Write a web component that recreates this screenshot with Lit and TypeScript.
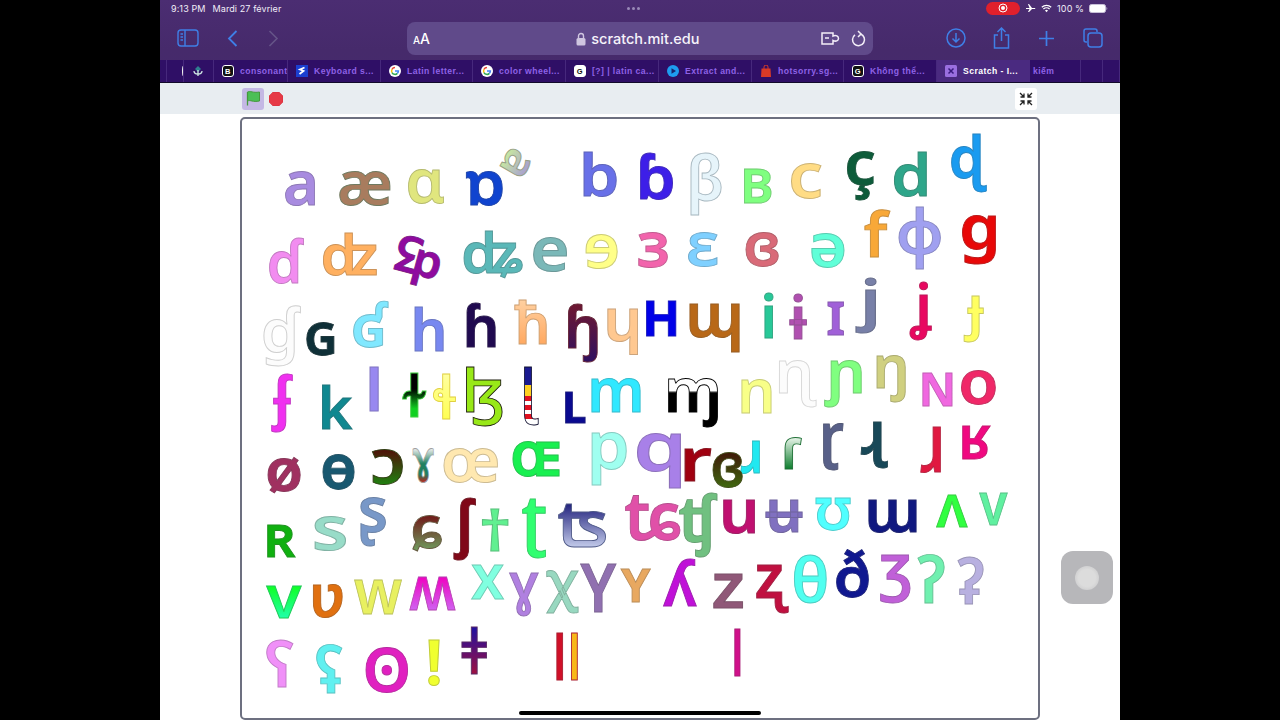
import { LitElement, html, svg, css } from "lit";
import { customElement } from "lit/decorators.js";

type Stop = [number, string];
interface G { c: string; b: number[]; f: string; s?: string; g?: Stop[]; h?: boolean; r?: number; }

const v = (a: string, b: string): Stop[] => [[0, a], [1, b]];

const GLYPHS: G[] = [
  { c: "a", b: [285, 171, 315, 206], f: "#a88be0" },
  { c: "æ", b: [339, 171, 391, 206], f: "#a87c5e", s: "#6f7a60" },
  { c: "ɑ", b: [408, 169, 444, 204], f: "#e0e67e" },
  { c: "ɒ", b: [466, 171, 503, 206], f: "#1044cf" },
  { c: "ɐ", b: [499, 144, 534, 181], f: "#b4c0a0", g: v("#c8e8a0", "#a8a0d0"), r: -60 },
  { c: "b", b: [583, 153, 617, 198], f: "#6870e8" },
  { c: "ɓ", b: [640, 152, 673, 200], f: "#3d1fe8" },
  { c: "β", b: [690, 152, 722, 215], f: "#e6f4fa", s: "#a8b8c0" },
  { c: "ʙ", b: [744, 168, 772, 203], f: "#7fff80" },
  { c: "c", b: [791, 163, 822, 199], f: "#ffdc85" },
  { c: "ç", b: [847, 150, 875, 200], f: "#0d5c3a" },
  { c: "d", b: [894, 152, 927, 198], f: "#2ea68a" },
  { c: "ɖ", b: [951, 134, 987, 192], f: "#1a9bf0" },

  { c: "ɗ", b: [269, 238, 304, 284], f: "#f28cf0" },
  { c: "ʣ", b: [323, 233, 377, 277], f: "#ffb060" },
  { c: "ʤ", b: [387, 233, 448, 290], f: "#8f0aa0", r: 195 },
  { c: "ʥ", b: [463, 230, 523, 279], f: "#5ab8b8" },
  { c: "e", b: [533, 237, 567, 272], f: "#7ab8b8" },
  { c: "ɘ", b: [585, 234, 618, 269], f: "#ffff88" },
  { c: "ɜ", b: [638, 232, 668, 268], f: "#f264ac" },
  { c: "ɛ", b: [688, 232, 718, 267], f: "#7fd0ff" },
  { c: "ɞ", b: [745, 232, 779, 267], f: "#d96a78" },
  { c: "ə", b: [811, 233, 845, 268], f: "#60ffd8" },
  { c: "f", b: [864, 209, 891, 257], f: "#f8a838" },
  { c: "ɸ", b: [898, 207, 941, 269], f: "#a0a0f0" },
  { c: "g", b: [962, 215, 996, 264], f: "#e80808" },

  { c: "ɠ", b: [263, 306, 301, 367], f: "#fcfcfc", s: "#cfcfcf" },
  { c: "ɢ", b: [306, 322, 335, 356], f: "#0f3038" },
  { c: "ʛ", b: [353, 301, 389, 348], f: "#80e8ff" },
  { c: "h", b: [414, 307, 444, 352], f: "#7888f0" },
  { c: "ɦ", b: [466, 302, 496, 347], f: "#200a50" },
  { c: "ħ", b: [514, 300, 547, 345], f: "#ffc080", g: v("#ffd0a0", "#ffa860") },
  { c: "ɧ", b: [568, 303, 598, 362], f: "#701830", g: v("#701830", "#301060") },
  { c: "ɥ", b: [607, 309, 638, 355], f: "#ffc890" },
  { c: "ʜ", b: [646, 300, 677, 336], f: "#0000e8" },
  { c: "ɰ", b: [689, 303, 740, 352], f: "#b86818" },
  { c: "i", b: [764, 292, 774, 338], f: "#28c898" },
  { c: "ɨ", b: [789, 293, 807, 339], f: "#b050b0" },
  { c: "ɪ", b: [827, 301, 844, 335], f: "#a060d8" },
  { c: "j", b: [855, 278, 877, 334], f: "#7880a8" },
  { c: "ʝ", b: [909, 282, 932, 341], f: "#e80860" },
  { c: "ɟ", b: [963, 296, 984, 343], f: "#ffff60", s: "#c8c860" },

  { c: "ʄ", b: [271, 373, 293, 432], f: "#f030f0" },
  { c: "k", b: [322, 385, 353, 430], f: "#108890" },
  { c: "l", b: [369, 367, 379, 412], f: "#9888f0" },
  { c: "ɫ", b: [402, 373, 427, 418], f: "#10c010", s: "#40d040", g: [[0, "#000"], [0.35, "#000"], [0.8, "#10d020"]] },
  { c: "ɬ", b: [433, 374, 456, 420], f: "#ffff60", s: "#e0d040", g: v("#ffffa0", "#ffff50") },
  { c: "ɮ", b: [466, 367, 503, 427], f: "#98e818", s: "#202010" },
  { c: "ɭ", b: [524, 367, 539, 425], f: "#fff", s: "#101030", g: [[0, "#1a1a90"], [0.3, "#1a1a90"], [0.3, "#ffd020"], [0.5, "#ffd020"], [0.5, "#e01020"], [0.58, "#e01020"], [0.58, "#fff"], [0.66, "#fff"], [0.66, "#e01020"], [0.74, "#e01020"], [0.74, "#fff"], [0.82, "#fff"], [0.82, "#e01020"], [0.9, "#e01020"], [0.9, "#fff"], [1, "#fff"]] },
  { c: "ʟ", b: [565, 391, 586, 423], f: "#0a0a90" },
  { c: "m", b: [591, 377, 641, 412], f: "#30e8ff" },
  { c: "ɱ", b: [668, 378, 718, 427], f: "#000", s: "#000", g: [[0, "#fff"], [0.25, "#fff"], [0.3, "#000"]] },
  { c: "n", b: [741, 378, 772, 413], f: "#f8ff88" },
  { c: "ɳ", b: [779, 360, 817, 408], f: "#fcfcfc", s: "#d8d8d8" },
  { c: "ɲ", b: [824, 360, 862, 408], f: "#80ff80" },
  { c: "ŋ", b: [876, 355, 906, 403], f: "#d0d080" },
  { c: "ɴ", b: [922, 372, 953, 406], f: "#f068e0" },
  { c: "o", b: [961, 370, 996, 405], f: "#f02868" },

  { c: "ø", b: [267, 457, 301, 494], f: "#a03060" },
  { c: "ɵ", b: [322, 454, 355, 490], f: "#185870" },
  { c: "ɔ", b: [372, 449, 403, 485], f: "#283c00", g: v("#501008", "#208010") },
  { c: "ɤ", b: [412, 448, 434, 483], f: "#208060", s: "#a0a0a0", g: [[0, "#f0f0f0"], [0.45, "#208060"], [0.75, "#208060"], [1, "#c02018"]] },
  { c: "œ", b: [443, 448, 498, 483], f: "#ffe8b0" },
  { c: "ɶ", b: [512, 441, 560, 477], f: "#18f050" },
  { c: "p", b: [591, 432, 627, 486], f: "#a0fff0" },
  { c: "q", b: [637, 433, 681, 488], f: "#a880e8" },
  { c: "r", b: [684, 447, 712, 481], f: "#a00010" },
  { c: "ɹ", b: [740, 440, 760, 474], f: "#20e8f0" },
  { c: "ɞ", b: [712, 452, 743, 488], f: "#405008", g: v("#401808", "#406810") },
  { c: "ɾ", b: [784, 436, 802, 469], f: "#108030", g: v("#f0f8f0", "#108030") },
  { c: "ɽ", b: [823, 423, 844, 471], f: "#586088" },
  { c: "ɻ", b: [860, 422, 888, 469], f: "#184858" },
  { c: "ɺ", b: [920, 427, 941, 474], f: "#e01840" },
  { c: "ʁ", b: [962, 425, 991, 459], f: "#f00880" },

  { c: "ʀ", b: [267, 523, 296, 557], f: "#10b010" },
  { c: "s", b: [314, 516, 346, 551], f: "#98dcc8" },
  { c: "ʂ", b: [360, 497, 386, 546], f: "#7898c8" },
  { c: "ɕ", b: [412, 515, 442, 552], f: "#70603c", g: v("#701818", "#70a060") },
  { c: "ʃ", b: [453, 497, 476, 560], f: "#800818" },
  { c: "†", b: [482, 509, 509, 552], f: "#60f090" },
  { c: "ʈ", b: [522, 499, 546, 558], f: "#30ff70" },
  { c: "ʦ", b: [558, 503, 606, 547], f: "#5060a0", g: v("#20207c", "#c0c8e8") },
  { c: "ʨ", b: [625, 495, 681, 541], f: "#e050a8" },
  { c: "ʧ", b: [679, 493, 718, 558], f: "#70c080" },
  { c: "u", b: [723, 499, 755, 534], f: "#c01070" },
  { c: "ʉ", b: [765, 499, 803, 533], f: "#8070c0" },
  { c: "ʊ", b: [815, 497, 851, 531], f: "#50ffff" },
  { c: "ɯ", b: [868, 499, 917, 533], f: "#101880" },
  { c: "ʌ", b: [936, 494, 968, 527], f: "#30ff40" },
  { c: "v", b: [979, 492, 1008, 525], f: "#60f0a0" },

  { c: "v", b: [266, 585, 302, 618], f: "#10ff60", g: v("#10ff20", "#20ffa8") },
  { c: "ʋ", b: [313, 584, 343, 618], f: "#e07010" },
  { c: "w", b: [354, 579, 402, 614], f: "#e8f060" },
  { c: "ʍ", b: [409, 576, 456, 610], f: "#e040d8", g: v("#f000c0", "#d060f0") },
  { c: "x", b: [471, 564, 504, 599], f: "#80ffe0" },
  { c: "ɣ", b: [509, 573, 539, 617], f: "#b080e0" },
  { c: "χ", b: [546, 570, 579, 614], f: "#98d8c0" },
  { c: "Y", b: [580, 564, 617, 612], f: "#9070b0" },
  { c: "ʏ", b: [620, 568, 651, 602], f: "#e8a860" },
  { c: "ʎ", b: [663, 558, 697, 606], f: "#c010d8" },
  { c: "z", b: [713, 573, 743, 608], f: "#905878" },
  { c: "ʐ", b: [756, 564, 789, 613], f: "#c01040" },
  { c: "θ", b: [794, 554, 827, 603], f: "#50fff0" },
  { c: "ð", b: [836, 549, 869, 598], f: "#101890" },
  { c: "ʒ", b: [880, 554, 911, 603], f: "#c060d8" },
  { c: "ʔ", b: [917, 554, 945, 603], f: "#70f0b0" },
  { c: "ʡ", b: [957, 556, 984, 604], f: "#b8b0e0" },

  { c: "ʕ", b: [266, 639, 294, 687], f: "#f090f8" },
  { c: "ʢ", b: [316, 644, 343, 693], f: "#60f0f0" },
  { c: "ʘ", b: [365, 647, 408, 693], f: "#e020c0" },
  { c: "!", b: [428, 639, 440, 686], f: "#f0ff30" },
  { c: "ǂ", b: [461, 627, 487, 675], f: "#602070", g: v("#2010a0", "#a01040") },
  { c: "ǁ", b: [556, 633, 578, 681], f: "#d01028", h: true, g: [[0, "#d01028"], [0.5, "#d01028"], [0.5, "#f8b818"], [1, "#f8b818"]] },
  { c: "ǀ", b: [734, 629, 741, 677], f: "#d0108a" },
];

const FONT = '"Noto Sans","DejaVu Sans",sans-serif';
const ctx = document.createElement("canvas").getContext("2d")!;

function darker(hex: string): string {
  const h = hex.length === 4 ? hex.slice(1).split("").map((x) => x + x).join("") : hex.slice(1);
  const n = parseInt(h, 16);
  const m = (x: number) => Math.round(x * 0.72 + 20);
  return `rgb(${m((n >> 16) & 255)},${m((n >> 8) & 255)},${m(n & 255)})`;
}

function glyph(d: G, i: number) {
  ctx.font = `600 100px ${FONT}`;
  const t = ctx.measureText(d.c);
  const L = t.actualBoundingBoxLeft, R = t.actualBoundingBoxRight;
  const A = t.actualBoundingBoxAscent, D = t.actualBoundingBoxDescent;
  const bw = Math.max(L + R, 1), bh = Math.max(A + D, 1);
  const [x0, y0, x1, y1] = d.b;
  const cx = (x0 + x1) / 2, cy = (y0 + y1) / 2;
  const W = x1 - x0 - 1, H = y1 - y0 - 1;
  let F: number, sx: number;
  if (d.r) {
    const a = (d.r * Math.PI) / 180, c = Math.abs(Math.cos(a)), s = Math.abs(Math.sin(a));
    const k = Math.min(W / (bw * c + bh * s), H / (bw * s + bh * c));
    F = k * 100; sx = 1;
  } else {
    F = (H / bh) * 100;
    sx = W / ((bw * F) / 100);
  }
  const u = F / 100;
  const gx = ((R - L) / 2) * u, gy = ((D - A) / 2) * u;
  const tf = `translate(${cx} ${cy}) rotate(${d.r || 0}) scale(${sx} 1) translate(${-gx} ${-gy})`;
  const id = `g${i}`;
  const def = d.g
    ? svg`<linearGradient id=${id} gradientUnits="userSpaceOnUse"
        x1=${d.h ? -L * u : 0} y1=${d.h ? 0 : -A * u} x2=${d.h ? R * u : 0} y2=${d.h ? 0 : D * u}>
        ${d.g.map((s) => svg`<stop offset=${s[0]} stop-color=${s[1]}></stop>`)}
      </linearGradient>`
    : null;
  return svg`${def}<text transform=${tf} font-size=${F} fill=${d.g ? `url(#${id})` : d.f}
    stroke=${d.s || darker(d.f)} stroke-width="0.9">${d.c}</text>`;
}

const googleIcon = html`<svg class="fav" viewBox="0 0 12 12">
  <circle cx="6" cy="6" r="6" fill="#fff"></circle>
  <path d="M6 2.6A3.4 3.4 0 0 0 3 4.4" fill="none" stroke="#ea4335" stroke-width="1.5"></path>
  <path d="M3 4.4a3.4 3.4 0 0 0 0 3.2" fill="none" stroke="#fbbc05" stroke-width="1.5"></path>
  <path d="M3 7.6a3.4 3.4 0 0 0 5.4.8" fill="none" stroke="#34a853" stroke-width="1.5"></path>
  <path d="M8.4 8.4A3.4 3.4 0 0 0 9.4 6H6" fill="none" stroke="#4285f4" stroke-width="1.5"></path>
</svg>`;

const squareIcon = (ch: string, bg = "#111", fg = "#fff", bd = "#fff") => html`<svg class="fav" viewBox="0 0 12 12">
  <rect x=".5" y=".5" width="11" height="11" rx="2.5" fill=${bg} stroke=${bd}></rect>
  <text x="6" y="8.6" font-size="7.5" font-weight="700" text-anchor="middle" fill=${fg} font-family="Liberation Sans">${ch}</text>
</svg>`;

const TABS: { w: number; label?: string; icon?: unknown; active?: boolean }[] = [
  { w: 7 },
  { w: 17, icon: html`<span class="cut"></span>` },
  { w: 30, icon: html`<svg class="fav" viewBox="0 0 12 12"><path d="M6 1 9 4 6 7 3 4Z" fill="#2f7f8f"></path><path d="M6 5v6M2 6c0 2 2 3 4 3s4-1 4-3" fill="none" stroke="#cfe8e4" stroke-width="1.3"></path></svg>` },
  { w: 74, label: "consonant", icon: squareIcon("B") },
  { w: 93, label: "Keyboard s...", icon: html`<svg class="fav" viewBox="0 0 12 12"><rect width="12" height="12" fill="#1b3fd0"></rect><path d="M8.5 2.5 4 4.5l3.5 1.5-4 3" fill="none" stroke="#fff" stroke-width="1.8"></path></svg>` },
  { w: 92, label: "Latin letter...", icon: googleIcon },
  { w: 93, label: "color wheel...", icon: googleIcon },
  { w: 93, label: "[?] | latin ca...", icon: squareIcon("G", "#fff", "#111", "#fff") },
  { w: 93, label: "Extract and...", icon: html`<svg class="fav" viewBox="0 0 12 12"><circle cx="6" cy="6" r="6" fill="#1e9bf0"></circle><path d="M4.5 3.2 9 6 4.5 8.8Z" fill="#16246e"></path></svg>` },
  { w: 92, label: "hotsorry.sg...", icon: html`<svg class="fav" viewBox="0 0 12 12"><path d="M1.5 3.5h9l.5 8.500H1Z" fill="#d93a26"></path><path d="M4 4V2a2 2 0 0 1 4 0v2" fill="none" stroke="#d93a26"></path></svg>` },
  { w: 93, label: "Không thể...", icon: squareIcon("G") },
  { w: 93, label: "Scratch - I...", active: true, icon: html`<svg class="fav" viewBox="0 0 12 12"><rect width="12" height="12" rx="1.500" fill="#9a6fe0"></rect><path d="M3.500 3.500 8.500 8.500M8.500 3.500 3.500 8.500" stroke="#3a1a80" stroke-width="1.500"></path></svg>` },
  { w: 51, label: "kiếm" },
  { w: 22 },
  { w: 17 },
];

@customElement("app-root")
export class AppRoot extends LitElement {
  static styles = css`
    :host { display: flex; justify-content: center; width: 1280px; height: 720px; background: #000; overflow: hidden; }
    .screen { position: relative; width: 960px; height: 720px; display: flex; flex-direction: column; background: #fff; overflow: hidden; font-family: "Liberation Sans", Arial, sans-serif; }
    .chrome { background: linear-gradient(#4b2d72, #462a6b 60%, #452a6c); }
    .status { height: 16px; display: flex; align-items: center; padding: 0 12px 0 11px; color: #f2eef8; font-size: 9px; font-weight: 400; font-family: Inter, "Liberation Sans", sans-serif; letter-spacing: 0.1px; }
    .status .date { margin-left: 7px; }
    .status .dots { flex: 1; display: flex; justify-content: center; gap: 2px; padding-left: 0; }
    .status .dots i { width: 3px; height: 3px; border-radius: 50%; background: #9a8ab8; }
    .status .right { display: flex; align-items: center; gap: 5px; }
    .rec { width: 34px; height: 13px; border-radius: 7px; background: #e0202c; display: flex; align-items: center; justify-content: center; }
    .toolbar { height: 44px; display: flex; align-items: center; padding: 0 17px; }
    .tb-left { width: 230px; display: flex; align-items: center; }
    .url { width: 466px; height: 33px; margin-top: 1px; border-radius: 8px; background: #604a8a; display: flex; align-items: center; padding: 0 7px 0 6px; box-sizing: border-box; color: #fff; }
    .aa { width: 164px; font-family: Inter, "Liberation Sans", sans-serif; font-weight: 500; font-size: 14px; }
    .aa small { font-size: 10px; }
    .host { display: flex; align-items: center; gap: 5px; font-family: Inter, "Liberation Sans", sans-serif; font-size: 14.500px; font-weight: 500; color: #f6f3fa; width: 246px; }
    .url-r { display: flex; align-items: center; gap: 11px; }
    .tb-right { display: flex; align-items: center; margin-left: 73px; gap: 27px; }
    .tabs { height: 23px; display: flex; background: #2f0f66; border-bottom: 1px solid #120a2a; box-sizing: border-box; }
    .tab { height: 100%; display: flex; align-items: center; gap: 6px; box-sizing: border-box; border-right: 1px solid #46287c; padding-left: 8px; overflow: hidden; white-space: nowrap; font-weight: 700; font-size: 8.600px; letter-spacing: 0.45px; color: #8e62e6; }
    .tab.blank { padding: 0; }
    .tab.active { background: #4a2a80; color: #fff; border-right-color: #4a2a80; }
    .tab.plain { padding-left: 3px; }
    .fav { width: 12px; height: 12px; flex: none; }
    .cut { width: 2px; height: 10px; margin-left: 7px; border-left: 2px solid #eee; border-radius: 50% 0 0 50%; }
    .controls { height: 31px; background: #e8edf1; display: flex; align-items: center; padding: 0 83px 0 82px; flex: none; }
    .flag { width: 22px; height: 22px; background: #c4b8e4; border-radius: 3px; display: flex; align-items: center; justify-content: center; }
    .stop { margin-left: 5px; flex: 1; display: flex; }
    .full { width: 22px; height: 22px; background: #fff; border-radius: 3px; display: flex; align-items: center; justify-content: center; }
    .body { flex: 1; padding: 3px 0 0 80px; }
    .stage { width: 800px; height: 603px; box-sizing: border-box; border: 2px solid #6d7080; border-radius: 5px; overflow: hidden; background: #fff; }
    .stage svg { display: block; width: 796px; height: 599px; font-family: "Noto Sans", "DejaVu Sans", sans-serif; font-weight: 600; }
    .home { position: absolute; left: 359px; top: 711px; width: 242px; height: 4px; border-radius: 2px; background: #000; }
    .touch { position: absolute; left: 901px; top: 551px; width: 52px; height: 53px; border-radius: 12px; background: #b7b7ba; display: flex; align-items: center; justify-content: center; }
    .touch i { width: 24px; height: 24px; border-radius: 50%; background: radial-gradient(#dcdcdc 50%, #c4c4c6 95%); }
  `;

  render() {
    const blue = "#3f7fe6";
    return html`<div class="screen">
      <div class="chrome">
        <div class="status">
          <span>9:13 PM</span><span class="date">Mardi 27 février</span>
          <span class="dots"><i></i><i></i><i></i></span>
          <span class="right">
            <span class="rec"><svg width="10" height="10" viewBox="0 0 10 10"><circle cx="5" cy="5" r="4" fill="none" stroke="#fff"></circle><circle cx="5" cy="5" r="2" fill="#fff"></circle></svg></span>
            <svg width="11" height="10" viewBox="0 0 11 10"><path d="M1 5h3.500L3 1h1l3 4h3a.6.6 0 0 1 0 1H7L4 9H3l1.500-3H1Z" fill="#fff" transform="rotate(0)"></path></svg>
            <svg width="11" height="9" viewBox="0 0 11 9"><path d="M.8 3.200a7 7 0 0 1 9.400 0M2.400 5a4.500 4.500 0 0 1 6.200 0" fill="none" stroke="#fff" stroke-width="1.200"></path><path d="M4 6.500a2.200 2.200 0 0 1 3 0L5.500 8.200Z" fill="#fff"></path></svg>
            <span>100 %</span>
            <svg width="19" height="9" viewBox="0 0 19 9"><rect x=".5" y=".5" width="16" height="8" rx="2" fill="#fff" stroke="#c8c0d8"></rect><path d="M17.500 3v3c1 0 1-3 0-3Z" fill="#c8c0d8"></path></svg>
          </span>
        </div>
        <div class="toolbar">
          <div class="tb-left">
            <svg width="22" height="18" viewBox="0 0 22 18" fill="none" stroke=${blue} stroke-width="1.400"><rect x="1" y="1" width="20" height="16" rx="3"></rect><path d="M8 1v16M3.500 5H6M3.500 8H6M3.500 11H6"></path></svg>
            <svg style="margin-left:28px" width="11" height="17" viewBox="0 0 11 17" fill="none" stroke=${blue} stroke-width="1.800"><path d="M9.500 1 2 8.500 9.500 16"></path></svg>
            <svg style="margin-left:30px" width="11" height="17" viewBox="0 0 11 17" fill="none" stroke="#655488" stroke-width="1.600"><path d="M1.500 1 9 8.500 1.500 16"></path></svg>
          </div>
          <div class="url">
            <span class="aa"><small>A</small>A</span>
            <span class="host">
              <svg width="10" height="14" viewBox="0 0 10 14"><path d="M2.500 6V4a2.500 2.500 0 0 1 5 0v2" fill="none" stroke="#cfc6e0" stroke-width="1.400"></path><rect x=".5" y="6" width="9" height="7.500" rx="1.500" fill="#cfc6e0"></rect></svg>
              scratch.mit.edu
            </span>
            <span class="url-r">
              <svg width="19" height="15" viewBox="0 0 19 15" fill="none" stroke="#f3eef8" stroke-width="1.500"><path d="M1 2h11v3c3-1.500 5.500.500 5.500 2.500S15 11 12 9.500V13H1Z"></path><path d="M4 7h4"></path></svg>
              <svg width="15" height="17" viewBox="0 0 15 17" fill="none" stroke="#f3eef8" stroke-width="1.500"><path d="M9.500 4A6 6 0 1 1 4 4.800"></path><path d="M7 1l3 3-3 3" transform="translate(0 0)"></path></svg>
            </span>
          </div>
          <div class="tb-right">
            <svg width="20" height="20" viewBox="0 0 20 20" fill="none" stroke=${blue} stroke-width="1.500"><circle cx="10" cy="10" r="9"></circle><path d="M10 5v9M6.500 10.500 10 14l3.500-3.500"></path></svg>
            <svg width="17" height="22" viewBox="0 0 17 22" fill="none" stroke=${blue} stroke-width="1.500"><path d="M5 8H1.500v13h14V8H12M8.500 14V1M4.500 5l4-4 4 4"></path></svg>
            <svg width="15" height="15" viewBox="0 0 15 15" fill="none" stroke=${blue} stroke-width="1.700" style="margin-left:2px"><path d="M7.500 0v15M0 7.500h15"></path></svg>
            <svg width="20" height="20" viewBox="0 0 20 20" fill="none" stroke=${blue} stroke-width="1.500" style="margin-left:2px"><rect x="5" y="5" width="14" height="14" rx="3"></rect><path d="M4 14H3a2 2 0 0 1-2-2V3a2 2 0 0 1 2-2h9a2 2 0 0 1 2 2v1"></path></svg>
          </div>
        </div>
        <div class="tabs">
          ${TABS.map((t) => html`<div class="tab ${t.active ? "active" : ""} ${t.label || t.icon ? "" : "blank"} ${t.label && !t.icon ? "plain" : ""}" style="width:${t.w}px">${t.icon}${t.label ? html`<span>${t.label}</span>` : ""}</div>`)}
        </div>
      </div>
      <div class="controls">
        <div class="flag"><svg width="15" height="15" viewBox="0 0 15 15"><path d="M1.500 1c3-1.500 5 1.200 12 0v9c-7 1.500-9-1.500-12 0Z" fill="#4cbf56" stroke="#45993d"></path><path d="M1.500 1v13.500" stroke="#45993d" stroke-width="1.300"></path></svg></div>
        <div class="stop"><svg width="14" height="14" viewBox="0 0 14 14"><path d="M4 0h6l4 4v6l-4 4H4l-4-4V4Z" fill="#e63a46" stroke="#c92a36" stroke-width=".5"></path></svg></div>
        <div class="full"><svg width="14" height="14" viewBox="0 0 14 14" fill="none" stroke="#222" stroke-width="1.300"><path d="M1 1l4 4M5 1.500V5H1.500M13 1 9 5M9 1.500V5h3.500M1 13l4-4M5 12.500V9H1.500M13 13 9 9M9 12.500V9h3.500"></path></svg></div>
      </div>
      <div class="body">
        <div class="stage">
          <svg viewBox="242 119 796 599">${GLYPHS.map(glyph)}</svg>
        </div>
      </div>
      <div class="home"></div>
      <div class="touch"><i></i></div>
    </div>`;
  }
}
